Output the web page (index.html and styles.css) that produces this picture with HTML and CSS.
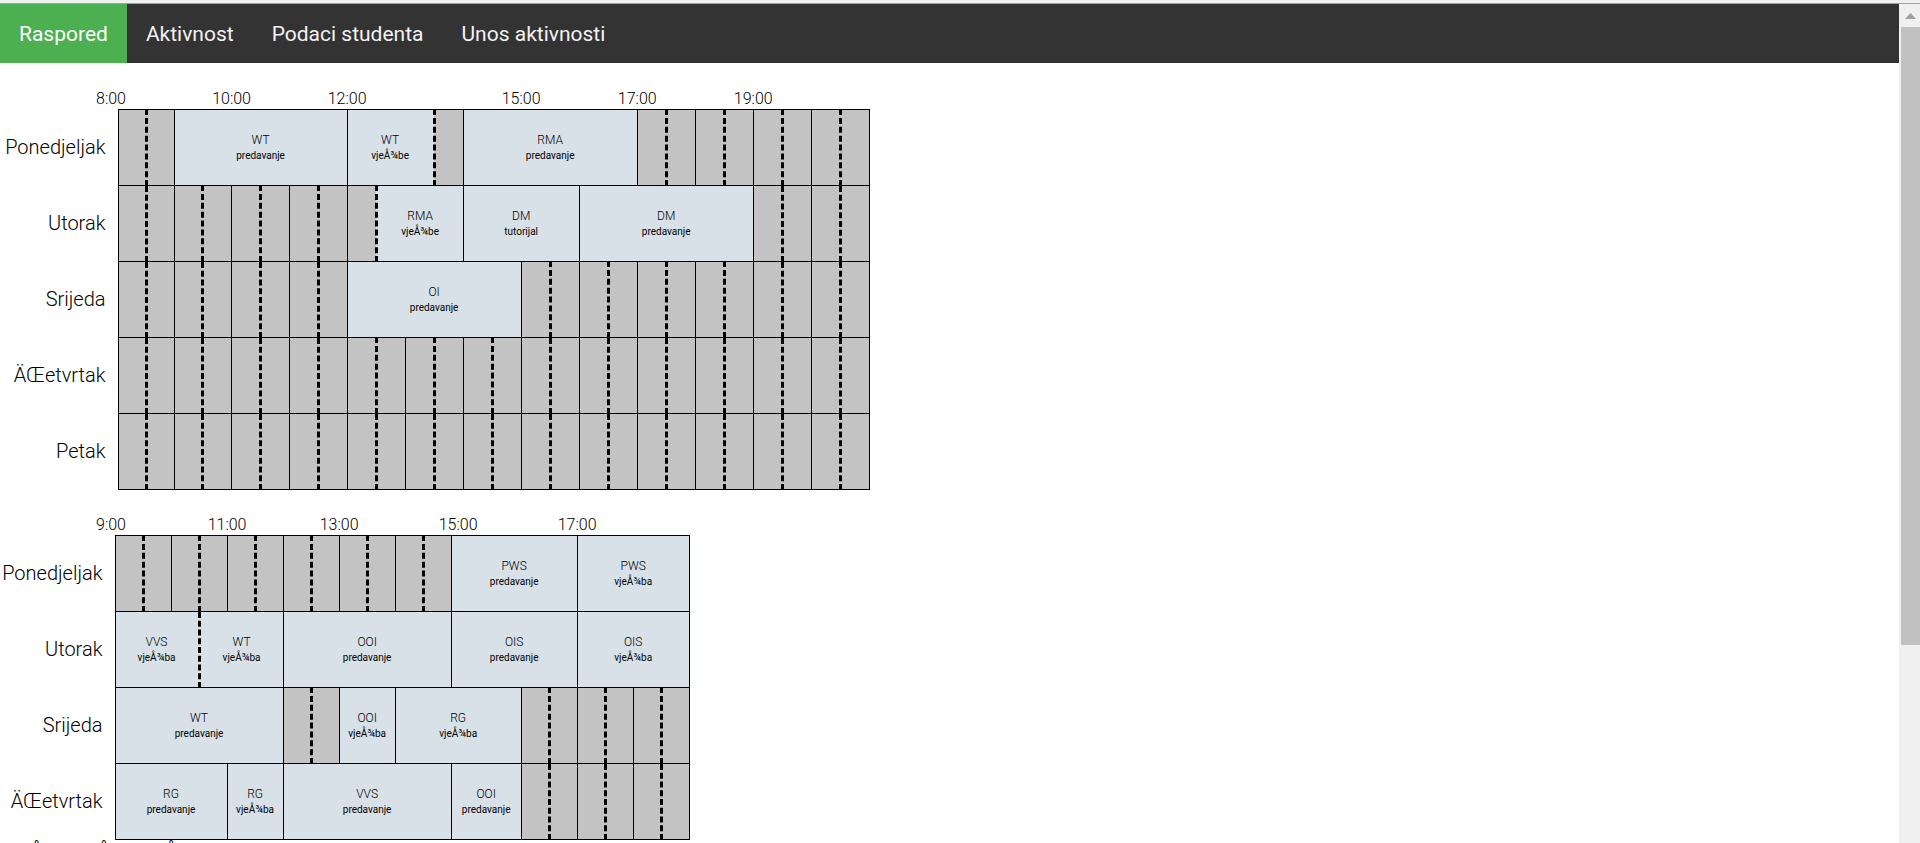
FILE: index.html
```html
<!DOCTYPE html>
<html lang="bs">
<head>
<meta charset="utf-8">
<title>Raspored</title>
<link rel="stylesheet" href="styles.css">
</head>
<body>
<div class="viewport">
<div class="page">
<nav class="nav">
<a class="nav-link active" href="#raspored">Raspored</a>
<a class="nav-link" href="#aktivnost">Aktivnost</a>
<a class="nav-link" href="#podaci">Podaci studenta</a>
<a class="nav-link" href="#unos">Unos aktivnosti</a>
</nav>
<main id="content"></main>
<p class="messages">GreÅ¡ka GreÅ¡ka GreÅ¡ka</p>
</div>
<div class="scrollbar"><svg class="arrow" viewBox="0 0 11 6" width="11" height="6"><path d="M0 6L5.500 0L11 6Z"/></svg><div class="thumb"></div></div>
</div>
<script src="schedule.js"></script>
</body>
</html>
```
FILE: styles.css
```css
body {
  margin: 0;
  font-family: Roboto, sans-serif;
  font-size: 16px;
  color: #000;
  background: #fff;
}
.viewport {
  display: flex;
  height: 100vh;
  box-sizing: border-box;
  border-top: 3px solid #f0f0f0;
  overflow: hidden;
}
.page {
  flex: 1;
  min-width: 0;
  overflow: hidden;
}
.nav {
  display: flex;
  margin-bottom: 21px;
  border-top: 1px solid #a0a0a0;
  background: #333;
}
.nav-link {
  padding: 18px 19px 16px;
  font-size: 21px;
  line-height: 25px;
  color: #f2f2f2;
  text-decoration: none;
}
.nav-link.active {
  background: #4caf50;
  color: #fff;
}
.schedule {
  table-layout: fixed;
  width: 0;
  border-collapse: collapse;
}
.schedule + .schedule { margin-top: 20px; }
.schedule th,
.schedule td {
  padding: 0;
}
.day-col { width: 118px; }
.short .day-col { width: 115px; }
.narrow { width: 28px; }
.half-hour { width: 29px; }
.wide { width: 70px; }
.hours th {
  height: 25px;
  font-weight: 300;
  line-height: 20px;
  vertical-align: bottom;
}
.hours .first {
  padding-left: 96px;
  text-align: left;
}
.schedule .day {
  height: 74px;
  padding: 0 12px 2px 0;
  font-size: 20px;
  font-weight: 300;
  text-align: right;
}
.schedule td {
  border: 1px solid #000;
  background: #c3c3c3;
  text-align: center;
}
.schedule .dashed { border-right: 3px dashed #000; }
.schedule .lesson { background: #d8e1e7; }
.subject {
  margin: 0;
  font-size: 12px;
  font-weight: 300;
  line-height: 16px;
}
.kind {
  margin: 0;
  font-size: 10px;
  line-height: 16px;
}
.messages {
  margin: 0;
  padding-left: 3px;
  font-size: 18px;
  line-height: 23px;
}
.scrollbar {
  display: flex;
  flex-direction: column;
  width: 19px;
  padding-left: 2px;
  border-top: 1px solid #a0a0a0;
  background: #f0f0f0;
}
.arrow {
  margin: 9px 4px 8px;
  fill: #a0a0a0;
}
.thumb {
  height: 73.7%;
  background: #c1c1c1;
}
```
FILE: schedule.js
```js
const P = n => Array(n).fill([[1, 'd'], [1]]).flat();
const L = (span, subject, kind, dashed) => [span, dashed ? 'd' : '', subject, kind];
const V = 'predavanje', B = 'vjeÅ¾be', A = 'vjeÅ¾ba';
const tables = [
  {
    cls: '', cols: [[3, 'narrow'], [23, 'half-hour']],
    hours: [[3, '8:00'], [4, '10:00'], [4, '12:00'], [2, ''], [4, '15:00'], [4, '17:00'], [4, '19:00'], [2, '']],
    days: [
      ['Ponedjeljak', [...P(1), L(6, 'WT', V), L(3, 'WT', B, 1), [1], L(6, 'RMA', V), ...P(4)]],
      ['Utorak', [...P(4), [1, 'd'], L(3, 'RMA', B), L(4, 'DM', 'tutorijal'), L(6, 'DM', V), ...P(2)]],
      ['Srijeda', [...P(4), L(6, 'OI', V), ...P(6)]],
      ['ÄŒetvrtak', P(13)],
      ['Petak', P(13)]
    ]
  },
  {
    cls: 'short', cols: [[12, 'narrow'], [1, 'wide'], [6, 'narrow']],
    hours: [[3, '9:00'], [4, '11:00'], [4, '13:00'], [3, '15:00'], [4, '17:00'], [2, '']],
    days: [
      ['Ponedjeljak', [...P(6), L(3, 'PWS', V), L(4, 'PWS', A)]],
      ['Utorak', [L(3, 'VVS', A, 1), L(3, 'WT', A), L(6, 'OOI', V), L(3, 'OIS', V), L(4, 'OIS', A)]],
      ['Srijeda', [L(6, 'WT', V), ...P(1), L(2, 'OOI', A), L(3, 'RG', A), ...P(3)]],
      ['ÄŒetvrtak', [L(4, 'RG', V), L(2, 'RG', A), L(6, 'VVS', V), L(1, 'OOI', V), ...P(3)]]
    ]
  }
];
const cell = ([span, d, s, k]) =>
  `<td colspan="${span}" class="${d ? 'dashed' : ''}${s ? ' lesson' : ''}">${s ? `<p class="subject">${s}</p><p class="kind">${k}</p>` : ''}</td>`;
document.getElementById('content').innerHTML = tables.map(t =>
  `<table class="schedule ${t.cls}"><colgroup><col class="day-col">` +
  t.cols.map(([n, c]) => `<col span="${n}" class="${c}">`).join('') + '</colgroup><tr class="hours">' +
  t.hours.map(([n, h], i) => `<th colspan="${n}"${i ? '' : ' class="first"'}>${h}</th>`).join('') + '</tr>' +
  t.days.map(([n, c]) => `<tr><th class="day">${n}</th>${c.map(cell).join('')}</tr>`).join('') + '</table>'
).join('');
```
